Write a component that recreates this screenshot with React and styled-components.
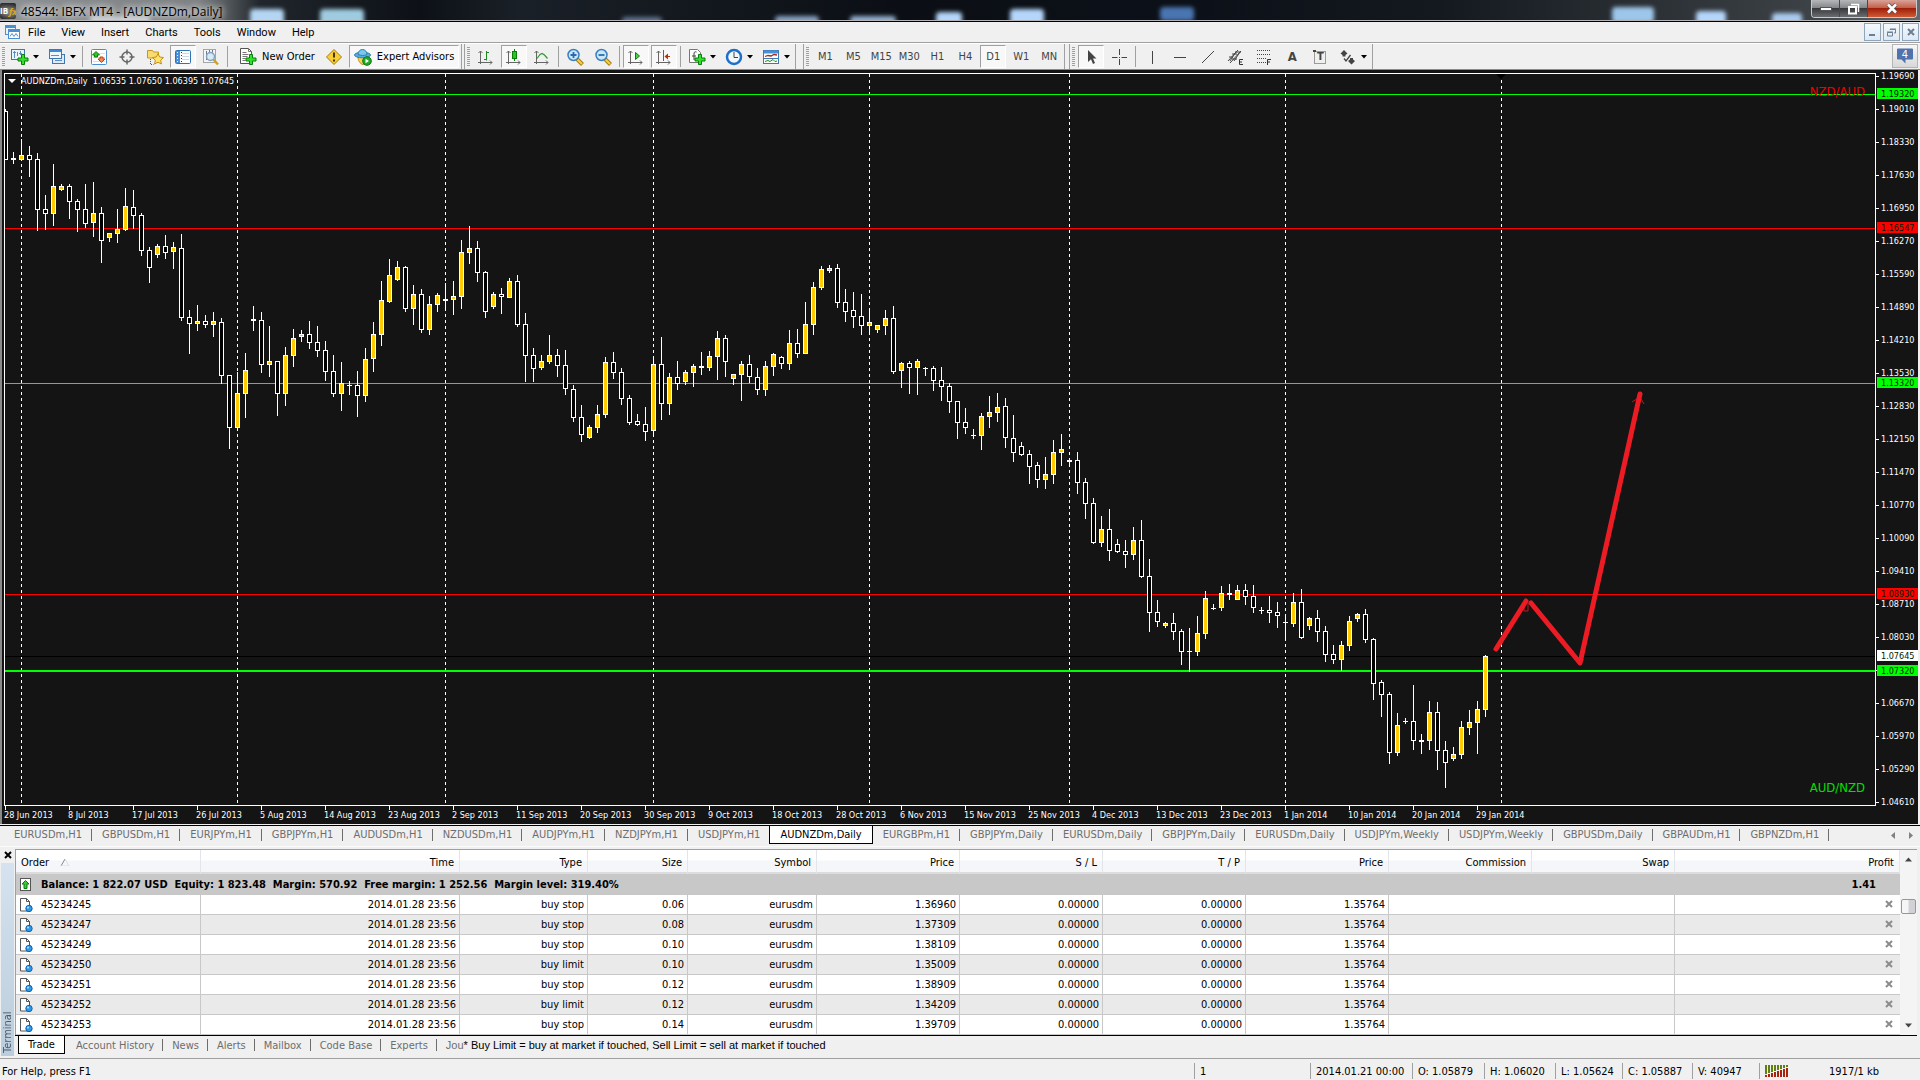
import { useState } from 'react';
import styled, { createGlobalStyle, css } from 'styled-components';

const GlobalStyle = createGlobalStyle`
  * {
    box-sizing: border-box;
  }

  body {
    margin: 0;
    background: #f0f0f0;
    color: #000;
    font-family: 'DejaVu Sans Condensed', 'DejaVu Sans', Roboto, sans-serif;
    font-size: 11px;
    overflow: hidden;
  }

  button {
    padding: 0;
    border: 0;
    background: none;
    color: inherit;
    font: inherit;
  }
`;

/* ---------- data ---------- */

const menus = ['File', 'View', 'Insert', 'Charts', 'Tools', 'Window', 'Help'];
const timeframes = ['M1', 'M5', 'M15', 'M30', 'H1', 'H4', 'D1', 'W1', 'MN'];

// high, body top, body bottom, low, 1 = bullish
const candles = [
  [109, 111, 160, 160, 0], [152, 158, 160, 164, 0], [139, 155, 160, 160, 1], [146, 155, 160, 177, 0],
  [153, 159, 210, 231, 0], [195, 209, 214, 230, 0], [164, 186, 214, 226, 1], [184, 186, 190, 191, 1],
  [184, 186, 202, 219, 0], [199, 201, 210, 232, 0], [184, 209, 224, 228, 0], [182, 213, 223, 237, 1],
  [207, 213, 241, 263, 0], [233, 233, 238, 242, 1], [209, 229, 234, 243, 1], [188, 206, 230, 231, 1],
  [190, 207, 216, 229, 0], [213, 215, 251, 256, 0], [247, 250, 268, 283, 0], [244, 246, 255, 258, 1],
  [235, 246, 253, 259, 0], [242, 247, 252, 269, 1], [234, 248, 318, 321, 0], [310, 317, 324, 354, 0],
  [305, 321, 324, 331, 1], [315, 321, 325, 328, 0], [312, 321, 325, 337, 1], [318, 322, 376, 384, 0],
  [375, 375, 428, 449, 0], [372, 393, 428, 430, 1], [353, 370, 394, 418, 1], [306, 319, 321, 331, 0],
  [312, 320, 365, 373, 0], [326, 361, 365, 377, 1], [361, 361, 394, 416, 0], [347, 355, 394, 406, 1],
  [329, 338, 356, 367, 1], [330, 334, 337, 342, 1], [321, 334, 343, 349, 0], [326, 342, 351, 357, 0],
  [341, 350, 372, 381, 0], [355, 371, 394, 397, 0], [362, 383, 394, 411, 1], [381, 385, 386, 395, 0],
  [371, 385, 396, 417, 0], [348, 359, 396, 402, 1], [322, 334, 359, 372, 1], [281, 300, 335, 346, 1],
  [259, 275, 302, 303, 1], [261, 267, 280, 281, 1], [266, 267, 309, 312, 0], [285, 294, 309, 325, 1],
  [289, 294, 330, 333, 0], [296, 304, 330, 335, 1], [293, 295, 305, 312, 1], [283, 299, 301, 310, 0],
  [281, 296, 300, 315, 1], [240, 252, 297, 309, 1], [226, 248, 253, 264, 1], [241, 248, 273, 282, 0],
  [271, 272, 312, 318, 0], [292, 294, 307, 309, 1], [288, 294, 297, 314, 0], [278, 281, 298, 298, 1],
  [275, 281, 325, 327, 0], [313, 324, 356, 382, 0], [348, 355, 369, 382, 0], [355, 361, 368, 370, 1],
  [335, 355, 362, 364, 1], [349, 355, 366, 377, 0], [350, 365, 389, 395, 0], [385, 389, 418, 422, 0],
  [405, 417, 435, 442, 0], [425, 427, 438, 439, 1], [405, 414, 428, 433, 1], [357, 362, 415, 418, 1],
  [352, 362, 373, 379, 0], [368, 372, 399, 405, 0], [395, 398, 423, 425, 0], [414, 421, 425, 426, 0],
  [407, 424, 432, 441, 0], [359, 364, 431, 437, 1], [337, 364, 404, 420, 0], [373, 377, 404, 415, 1],
  [361, 377, 384, 390, 0], [370, 372, 382, 385, 1], [364, 366, 373, 387, 1], [352, 366, 368, 375, 0],
  [351, 356, 368, 371, 1], [331, 338, 357, 380, 1], [335, 338, 362, 377, 0], [374, 374, 379, 385, 1],
  [361, 364, 375, 401, 1], [355, 364, 377, 383, 0], [368, 377, 390, 395, 0], [361, 366, 390, 396, 1],
  [353, 354, 367, 376, 1], [356, 357, 364, 369, 0], [330, 343, 364, 370, 1], [329, 343, 354, 358, 0],
  [302, 324, 354, 354, 1], [282, 287, 325, 335, 1], [266, 269, 288, 290, 1], [265, 268, 271, 273, 1],
  [264, 268, 303, 308, 0], [289, 302, 312, 322, 0], [292, 310, 317, 328, 0], [294, 316, 326, 335, 0],
  [311, 322, 326, 335, 1], [325, 325, 330, 333, 1], [310, 318, 326, 335, 1], [306, 318, 372, 374, 0],
  [362, 363, 371, 388, 1], [361, 363, 368, 394, 0], [359, 361, 368, 395, 1], [367, 368, 369, 376, 0],
  [366, 368, 381, 391, 0], [367, 380, 387, 401, 0], [383, 386, 402, 413, 0], [401, 401, 423, 439, 0],
  [408, 422, 428, 434, 0], [429, 435, 436, 439, 0], [413, 416, 436, 450, 1], [396, 412, 417, 428, 1],
  [393, 407, 413, 422, 1], [398, 406, 438, 448, 0], [415, 438, 453, 462, 0], [442, 446, 455, 456, 0],
  [450, 454, 467, 484, 0], [462, 465, 480, 488, 0], [457, 474, 480, 489, 1], [440, 452, 475, 484, 1],
  [434, 449, 453, 466, 1], [459, 460, 462, 465, 0], [452, 460, 483, 494, 0], [478, 482, 504, 519, 0],
  [498, 503, 543, 544, 0], [516, 529, 543, 547, 1], [509, 529, 551, 561, 0], [539, 544, 552, 553, 0],
  [540, 551, 555, 568, 0], [527, 540, 555, 560, 1], [520, 540, 577, 578, 0], [559, 576, 613, 632, 0],
  [600, 612, 622, 627, 0], [622, 623, 626, 628, 1], [613, 623, 632, 640, 0], [629, 631, 652, 665, 0],
  [628, 651, 652, 672, 0], [616, 633, 652, 656, 1], [591, 598, 634, 639, 1], [604, 608, 609, 610, 0],
  [586, 593, 608, 611, 1], [584, 593, 595, 600, 0], [585, 590, 600, 600, 1], [584, 590, 597, 605, 0],
  [585, 596, 608, 613, 0], [607, 610, 611, 614, 0], [596, 610, 613, 623, 0], [602, 612, 616, 628, 0],
  [614, 622, 623, 640, 0], [593, 602, 624, 627, 1], [589, 602, 638, 639, 0], [617, 618, 626, 630, 1],
  [610, 618, 632, 642, 0], [626, 631, 655, 662, 0], [645, 654, 660, 664, 0], [641, 645, 660, 671, 1],
  [616, 621, 646, 651, 1], [613, 614, 619, 622, 1], [609, 614, 640, 643, 0], [638, 639, 684, 700, 0],
  [680, 682, 695, 717, 0], [692, 694, 753, 764, 0], [713, 725, 753, 756, 1], [718, 721, 722, 724, 0],
  [685, 721, 741, 750, 0], [734, 740, 742, 754, 0], [701, 712, 741, 750, 1], [702, 712, 751, 770, 0],
  [741, 750, 763, 788, 0], [747, 754, 759, 761, 1], [721, 727, 755, 759, 1], [710, 722, 728, 735, 1],
  [701, 709, 723, 754, 1], [655, 656, 710, 717, 1],
];

const monthLines = [21, 237, 445, 653, 869, 1069, 1285, 1501];

const levels = [
  { y: 94, color: '#00ff00', size: 1 },
  { y: 228, color: '#ff0000', size: 1 },
  { y: 383, color: '#00ff00', size: 1 },
  { y: 594, color: '#ff0000', size: 1 },
  { y: 656, color: '#000000', size: 1 },
  { y: 670, color: '#00ff00', size: 2 },
];

const prices = [
  '1.19690', '1.19010', '1.18330', '1.17630', '1.16950', '1.16270', '1.15590', '1.14890',
  '1.14210', '1.13530', '1.12830', '1.12150', '1.11470', '1.10770', '1.10090', '1.09410',
  '1.08710', '1.08030', '', '1.06670', '1.05970', '1.05290', '1.04610',
];

const priceTags = [
  { y: 94, text: '1.19320', color: '#00ff00' },
  { y: 228, text: '1.16547', color: '#ff0000' },
  { y: 383, text: '1.13320', color: '#00ff00' },
  { y: 594, text: '1.08930', color: '#ff0000' },
  { y: 656, text: '1.07645', color: '#ffffff' },
  { y: 671, text: '1.07320', color: '#00ff00' },
];

const dates = [
  '28 Jun 2013', '8 Jul 2013', '17 Jul 2013', '26 Jul 2013', '5 Aug 2013', '14 Aug 2013',
  '23 Aug 2013', '2 Sep 2013', '11 Sep 2013', '20 Sep 2013', '30 Sep 2013', '9 Oct 2013',
  '18 Oct 2013', '28 Oct 2013', '6 Nov 2013', '15 Nov 2013', '25 Nov 2013', '4 Dec 2013',
  '13 Dec 2013', '23 Dec 2013', '1 Jan 2014', '10 Jan 2014', '20 Jan 2014', '29 Jan 2014',
];

const chartTabs = [
  'EURUSDm,H1', 'GBPUSDm,H1', 'EURJPYm,H1', 'GBPJPYm,H1', 'AUDUSDm,H1', 'NZDUSDm,H1',
  'AUDJPYm,H1', 'NZDJPYm,H1', 'USDJPYm,H1', 'AUDNZDm,Daily', 'EURGBPm,H1', 'GBPJPYm,Daily',
  'EURUSDm,Daily', 'GBPJPYm,Daily', 'EURUSDm,Daily', 'USDJPYm,Weekly', 'USDJPYm,Weekly',
  'GBPUSDm,Daily', 'GBPAUDm,H1', 'GBPNZDm,H1',
];

const columns = [
  { name: 'Order', width: 185 },
  { name: 'Time', width: 259 },
  { name: 'Type', width: 128 },
  { name: 'Size', width: 100 },
  { name: 'Symbol', width: 129 },
  { name: 'Price', width: 143 },
  { name: 'S / L', width: 143 },
  { name: 'T / P', width: 143 },
  { name: 'Price', width: 143 },
  { name: 'Commission', width: 143 },
  { name: 'Swap', width: 143 },
  { name: 'Profit' },
];

const orders = [
  { id: '45234245', type: 'buy stop', size: '0.06', price: '1.36960' },
  { id: '45234247', type: 'buy stop', size: '0.08', price: '1.37309' },
  { id: '45234249', type: 'buy stop', size: '0.10', price: '1.38109' },
  { id: '45234250', type: 'buy limit', size: '0.10', price: '1.35009' },
  { id: '45234251', type: 'buy stop', size: '0.12', price: '1.38909' },
  { id: '45234252', type: 'buy limit', size: '0.12', price: '1.34209' },
  { id: '45234253', type: 'buy stop', size: '0.14', price: '1.39709' },
];

const terminalTabs = ['Trade', 'Account History', 'News', 'Alerts', 'Mailbox', 'Code Base', 'Experts'];

/* ---------- icons ---------- */

const Icon = ({ size = 18, children }) => (
  <svg width={size} height={size} viewBox={`0 0 ${size} ${size}`} fill="none" aria-hidden="true">
    {children}
  </svg>
);

const Plus = () => (
  <path d="M10.500 6.500h3v3.500h3.500v3h-3.500v3.500h-3v-3.500H7v-3h3.500z" fill="#35e02c" stroke="#0b7d0b" />
);

const NewChartIcon = () => (
  <Icon>
    <rect x="0.500" y="1.500" width="13" height="10" fill="#eaf4fd" stroke="#3f78b0" />
    <path d="M3.500 3v7M2 4.500h3M6.500 4v4M9.500 3v4M8 5.500h3" stroke="#5b8fc2" />
    <Plus />
  </Icon>
);

const ProfilesIcon = () => (
  <Icon>
    <rect x="4.500" y="6.500" width="12" height="9" fill="#dcebf9" stroke="#3f78b0" />
    <path d="M7 12.500h7" stroke="#5b8fc2" />
    <rect x="1.500" y="1.500" width="12" height="9" fill="#eef6fd" stroke="#3f78b0" />
    <path d="M2 3h11" stroke="#3f8ad0" strokeWidth="2" />
    <path d="M3 7.500h8" stroke="#5b8fc2" />
  </Icon>
);

const MarketWatchIcon = () => (
  <Icon>
    <rect x="1.500" y="1.500" width="15" height="15" rx="1" fill="#fff" stroke="#4a90d0" />
    <path d="M3 5.500h12M3 9.500h12M3 13.500h12" stroke="#cfe0ef" />
    <path d="M6 3.500l3.500 3.500H7.500v2h-3V7H2.500z" fill="#2fc52f" stroke="#0b7d0b" />
    <path d="M11.500 14.500L8 11h2V9h3v2h2z" fill="#f08a50" stroke="#c0401a" />
  </Icon>
);

const TargetIcon = () => (
  <Icon>
    <circle cx="9" cy="9" r="5" stroke="#666" strokeWidth="1.500" />
    <path d="M9 1.500v5M9 11.500v5M1.500 9h5M11.500 9h5" stroke="#666" strokeWidth="1.500" />
  </Icon>
);

const FavoritesIcon = () => (
  <Icon>
    <path d="M1.500 2.500h5l1 1.500h5v6h-11z" fill="#f8dc70" stroke="#c09a20" />
    <path d="M4.500 11v5.500h3" stroke="#555" strokeDasharray="1 1" />
    <path d="M12 5.500l1.700 3.500 3.800.5-2.800 2.700.7 3.800-3.400-1.800-3.400 1.800.7-3.800-2.800-2.700 3.800-.5z" fill="#ffe36b" stroke="#c58f13" />
  </Icon>
);

const NavigatorIcon = () => (
  <Icon>
    <rect x="1.500" y="2.500" width="15" height="13" rx="1" fill="#fff" stroke="#2f74b5" />
    <rect x="2" y="3" width="4" height="12" fill="#4a90d8" />
    <path d="M3.500 4v10" stroke="#fff" strokeDasharray="1 2" />
    <path d="M8 5.500h7M8 8.500h7M8 11.500h7" stroke="#c9d8e8" />
    <path d="M7.500 4v10" stroke="#333" strokeDasharray="1 2" />
  </Icon>
);

const TesterIcon = () => (
  <Icon>
    <rect x="1.500" y="1.500" width="12" height="13" fill="#f6f6f6" stroke="#a5a5a5" />
    <path d="M4.500 3v9M7.500 2v4M10.500 2v5" stroke="#777" />
    <path d="M11 11l5 5.500" stroke="#d6a11a" strokeWidth="2.500" />
    <circle cx="8.500" cy="8.500" r="4" fill="#cfe6f8" fillOpacity="0.800" stroke="#7fa6c8" strokeWidth="1.500" />
  </Icon>
);

const NewOrderIcon = () => (
  <Icon>
    <path d="M1.500.500h8l3 3v12h-11z" fill="#fff" stroke="#555" />
    <path d="M9.500.500v3h3M3.500 4.500h4M3.500 6.500h6M3.500 8.500h5M3.500 10.500h3M3.500 12.500h3" stroke="#777" />
    <Plus />
  </Icon>
);

const AlertIcon = () => (
  <Icon>
    <path d="M9 1.500l7.500 7.500L9 16.500 1.500 9z" fill="#f7cf35" stroke="#a87c0a" />
    <path d="M9 4.500v5M9 11.500v2" stroke="#4a3500" strokeWidth="2" />
  </Icon>
);

const AdvisorIcon = () => (
  <Icon>
    <path d="M4 8.500c0 4 2 7.500 5 8 3-.5 5-4 5-8z" fill="#f7d552" stroke="#bb8b1a" />
    <ellipse cx="8.500" cy="7" rx="8" ry="2.800" fill="#56aee0" stroke="#2c7fb5" />
    <path d="M4 6.500c0-3 2-5 4.500-5s4.500 2 4.500 5c-3 1.300-6 1.300-9 0z" fill="#7cc7ee" stroke="#2c7fb5" />
    <circle cx="13" cy="13" r="4.300" fill="#1faa28" stroke="#0d7a14" />
    <path d="M11.500 10.800v4.400l3.500-2.200z" fill="#fff" />
  </Icon>
);

const Axes = () => (
  <path d="M3.500 16V3M1.500 5l2-2 2 2M1 14.500h14M13 12.500l2 2-2 2" stroke="#666" />
);

const BarChartIcon = () => (
  <Icon>
    <Axes />
    <path d="M9.500 3v9.500M9 4.500h3M7 11.500h3" stroke="#1d8a1d" />
  </Icon>
);

const CandleChartIcon = () => (
  <Icon>
    <Axes />
    <path d="M9.500 1v12" stroke="#0b7d0b" />
    <rect x="7.500" y="3.500" width="4" height="7" fill="#28c428" stroke="#0b7d0b" />
  </Icon>
);

const LineChartIcon = () => (
  <Icon>
    <Axes />
    <path d="M4 10.500l3-4 2-1 2.500 1.500 3 3.500" stroke="#2f9a2f" strokeWidth="1.200" />
  </Icon>
);

const ZoomIcon = ({ plus }) => (
  <Icon>
    <path d="M11 11l5.500 5.500" stroke="#a87c0a" strokeWidth="4" />
    <path d="M11 11l5 5" stroke="#f5d24a" strokeWidth="2" />
    <circle cx="7.500" cy="7" r="5.500" fill="#c9e7fb" stroke="#3b7fc0" strokeWidth="1.500" />
    <path d={plus ? 'M4.500 7h6M7.500 4v6' : 'M4.500 7h6'} stroke="#2a6bb0" strokeWidth="1.800" />
  </Icon>
);

const AutoScrollIcon = () => (
  <Icon>
    <Axes />
    <path d="M8.500 4.500v7l4-3.500z" fill="#4fd04f" stroke="#0b7d0b" />
  </Icon>
);

const ShiftIcon = () => (
  <Icon>
    <Axes />
    <path d="M8.500 2v11" stroke="#1e6fb8" />
    <path d="M10 8.500h5" stroke="#b5320f" />
    <path d="M13 5.500v6l-3.500-3z" fill="#b5320f" />
  </Icon>
);

const IndicatorsIcon = () => (
  <Icon>
    <path d="M1.500 1.500h8l3 3v10h-11z" fill="#fff" stroke="#777" />
    <path d="M8.500 4c-2-.8-2.500.5-2.500 2v6M4 8h4" stroke="#444" />
    <Plus />
  </Icon>
);

const ClockIcon = () => (
  <Icon>
    <circle cx="9" cy="9" r="7" fill="#f2f7fb" stroke="#1d6fc9" strokeWidth="2.500" />
    <path d="M9 4v5.500h4" stroke="#444" />
  </Icon>
);

const TemplateIcon = () => (
  <Icon>
    <rect x="1.500" y="2.500" width="15" height="13" fill="#fff" stroke="#3f78b0" />
    <path d="M2 4h14" stroke="#4a90d8" strokeWidth="3" />
    <path d="M2 10.500h14" stroke="#3f78b0" />
    <path d="M3 8.500l3-1 3 .5 3-1.500 3 .5" stroke="#a52c18" strokeWidth="1.300" />
    <path d="M3 13.500l3-1 2 1 3-2 2 2 2-.5" stroke="#1d8a1d" />
  </Icon>
);

const CursorIcon = () => (
  <Icon>
    <path d="M6 2v12l3-2.700 2 4.700 2-1-2-4.500h3.500z" fill="#444" />
  </Icon>
);

const CrosshairIcon = () => (
  <Icon>
    <path d="M9.500 1v6M9.500 11v6M2 9.500h5.500M11.500 9.500H17M9 9.500h1" stroke="#444" />
  </Icon>
);

const VLineIcon = () => (
  <Icon>
    <path d="M9.500 3v13" stroke="#444" />
  </Icon>
);

const HLineIcon = () => (
  <Icon>
    <path d="M3 9.500h12" stroke="#444" />
  </Icon>
);

const TrendIcon = () => (
  <Icon>
    <path d="M3 15L15 3" stroke="#444" />
  </Icon>
);

const ChannelIcon = () => (
  <Icon>
    <path d="M1 13L11 2M3 15L14 3M2 9h4M5 6h5M8 4h6M5 11h5M3 13l6-9M7 13l6-9" stroke="#444" />
    <path d="M16 11.500h-3.500v5H16M12.500 14H15" stroke="#333" />
  </Icon>
);

const FiboIcon = () => (
  <Icon>
    <path d="M2 2.500h14M2 6.500h14M2 10.500h10M2 14.500h9" stroke="#444" strokeDasharray="1 1" />
    <path d="M12.500 17v-5.500H16M12.500 14H15" stroke="#333" />
  </Icon>
);

const LabelIcon = () => (
  <Icon>
    <rect x="3.500" y="3.500" width="11" height="12" stroke="#444" strokeDasharray="1 1" />
    <path d="M2 2h3v2H2z" fill="#444" />
  </Icon>
);

const ArrowsIcon = () => (
  <Icon>
    <path d="M5 2l3.500 3.500L6.500 7v1.500h-3V7L1.500 5.500zM12.500 16.500L9 13l2-1.500V10h3v1.500l2 1.500z" fill="#444" />
    <path d="M5 10.500l2 2.500 4.500-6" stroke="#444" strokeWidth="1.300" />
  </Icon>
);

const Caret = () => (
  <svg width="6" height="4" aria-hidden="true">
    <path d="M0 0h6L3 3.500z" fill="#000" />
  </svg>
);

const OrderIcon = () => (
  <svg width="14" height="16" viewBox="0 0 14 16" fill="none" aria-hidden="true">
    <path d="M1.500 1.500h6l3 3v9.500h-9z" fill="#fff" stroke="#555" />
    <path d="M7.500 1.500v3h3" stroke="#555" />
    <circle cx="10" cy="11.500" r="3.200" fill="#2f9ae8" stroke="#1561a8" />
    <circle cx="9" cy="10.500" r="1" fill="#bfe2fb" />
  </svg>
);

const BalanceIcon = () => (
  <svg width="14" height="14" viewBox="0 0 14 14" fill="none" aria-hidden="true">
    <rect x="1.500" y="0.500" width="10" height="12" fill="#fff" stroke="#555" />
    <path d="M6.500 2.500L10 6H8v4.500H5V6H3z" fill="#35c935" stroke="#0b7d0b" />
  </svg>
);

const CloseMark = ({ color = '#8c8c8c' }) => (
  <svg width="8" height="8" viewBox="0 0 8 8" aria-hidden="true">
    <path d="M1 1l6 6M7 1L1 7" stroke={color} strokeWidth="2" />
  </svg>
);

/* ---------- title bar and menu ---------- */

const TitleRow = styled.header`
  position: relative;
  display: flex;
  flex: none;
  justify-content: space-between;
  height: 22px;
  background: linear-gradient(90deg, #8d9092 0, #7d8183 200px, #20262b 260px, #0d1117 420px, #1a2027 520px, #0b0f15 900px, #0c1018 1200px, #14191f 75%, #3c4146 94%, #63686c);
  border-bottom: 1px solid #000;
  box-shadow: inset 0 -1px #b4b4b8;
  overflow: hidden;
`;

const Backdrop = styled.svg`
  position: absolute;
  inset: 0;
  width: 100%;
  height: 20px;
`;

const TitleText = styled.h1`
  position: relative;
  display: flex;
  align-items: center;
  gap: 5px;
  height: 20px;
  margin: 0;
  padding-top: 2px;
  font: 400 12px 'Open Sans', 'Noto Sans', sans-serif;
  text-shadow: 0 0 6px #fff, 0 0 10px #fff;
`;

const WindowButtons = styled.div`
  position: relative;
  display: flex;
  height: 18px;
  margin-right: 3px;
  border: 1px solid #c8cacc;
  border-top: 0;
  border-radius: 0 0 4px 4px;
  overflow: hidden;
`;

const WindowButton = styled.button`
  display: flex;
  align-items: center;
  justify-content: center;
  width: ${({ $close }) => ($close ? '48px' : '28px')};
  border-right: 1px solid #46494c;
  background: linear-gradient(#b5b7b9, #85888a 45%, #37393b 50%, #6a6d70);

  ${({ $close }) =>
    $close &&
    css`
      border-right: 0;
      background: linear-gradient(#d9a398, #c4604d 45%, #a01f08 50%, #cf5a35);
    `}
`;

const MenuRow = styled.nav`
  display: flex;
  flex: none;
  align-items: center;
  height: 21px;
  padding: 0 1px 0 5px;
  background: #f0f0f0;
  border-bottom: 1px solid #a0a0a0;
`;

const MenuItem = styled.button`
  height: 20px;
  padding: 0 8px;
  font: 11px Roboto, 'Open Sans', sans-serif;
`;

const MdiButtons = styled.div`
  display: flex;
  gap: 2px;
  margin-left: auto;
`;

const MdiButton = styled.button`
  display: flex;
  align-items: center;
  justify-content: center;
  width: 17px;
  height: 18px;
  border: 1px solid #8fa5ba;
  background: linear-gradient(#f4f9fd, #dce9f5);
`;

const blobs = [
  [250, 9, 34, 20, '#b4d6f4'], [320, 9, 44, 20, '#9fcbe0'], [90, 16, 60, 10, '#c8ced2'], [622, 17, 40, 8, '#5f7690'],
  [775, 16, 44, 8, '#86a2c4'], [850, 16, 46, 8, '#93b0d0'], [936, 12, 26, 14, '#b4d6fa'], [1010, 9, 34, 16, '#b4d6fa'],
  [1160, 7, 34, 14, '#4a75b0'], [1612, 7, 42, 16, '#9cc6ea'], [1696, 11, 30, 14, '#b4d6fa'], [1772, 13, 30, 12, '#a9caee'],
];

const TitleBar = () => (
  <TitleRow>
    <Backdrop aria-hidden="true">
      <filter id="soft" x="-30%" y="-60%" width="160%" height="220%">
        <feGaussianBlur stdDeviation="2" />
      </filter>
      {blobs.map(([x, y, w, h, fill]) => (
        <rect key={x} x={x} y={y} width={w} height={h} rx="4" fill={fill} filter="url(#soft)" />
      ))}
    </Backdrop>
    <TitleText>
      <svg width="16" height="16" viewBox="0 0 16 16" aria-hidden="true">
        <rect width="16" height="16" rx="2" fill="#1b1b1b" />
        <text x="0" y="11" fontSize="8" fontWeight="700" fill="#fff">IB</text>
        <text x="9" y="12" fontSize="9" fontStyle="italic" fontWeight="700" fill="#d6a81c">fx</text>
      </svg>
      48544: IBFX MT4 - [AUDNZDm,Daily]
    </TitleText>
    <WindowButtons>
      <WindowButton aria-label="Minimize window">
        <svg width="12" height="6"><rect x="0.500" y="1.500" width="11" height="3" fill="#fff" stroke="#555" /></svg>
      </WindowButton>
      <WindowButton aria-label="Restore window">
        <svg width="13" height="12" fill="none">
          <path d="M4 1.500h7.500V9" stroke="#fff" strokeWidth="1.500" />
          <rect x="2" y="4" width="7" height="6.500" stroke="#fff" strokeWidth="2" />
        </svg>
      </WindowButton>
      <WindowButton $close aria-label="Close window">
        <svg width="12" height="11">
          <path d="M2 1.500l8 8M10 1.500l-8 8" stroke="#555" strokeWidth="4" />
          <path d="M2 1.500l8 8M10 1.500l-8 8" stroke="#fff" strokeWidth="2.500" />
        </svg>
      </WindowButton>
    </WindowButtons>
  </TitleRow>
);

const MenuBar = () => (
  <MenuRow>
    <svg width="15" height="15" viewBox="0 0 15 15" fill="none" aria-hidden="true">
      <rect x="0.500" y="0.500" width="10" height="9" fill="#eaf4fd" stroke="#4a90d0" />
      <path d="M1 2h9" stroke="#4a90d0" strokeWidth="2" />
      <rect x="3.500" y="4.500" width="11" height="9" fill="#fff" stroke="#4a90d0" />
      <path d="M4 6h10" stroke="#4a90d0" strokeWidth="2" />
      <path d="M5 11.500l2-3 2 3 2-3 2 3" stroke="#5b8fc2" />
    </svg>
    {menus.map((menu) => (
      <MenuItem key={menu}>{menu}</MenuItem>
    ))}
    <MdiButtons>
      <MdiButton aria-label="Minimize chart">
        <svg width="9" height="9"><path d="M1 7h6" stroke="#6d7f90" strokeWidth="2" /></svg>
      </MdiButton>
      <MdiButton aria-label="Restore chart">
        <svg width="9" height="9" fill="none">
          <path d="M3 2V1.500h5.500V5H7M.500 4.500h5v3.500h-5zM3 1h6M0 4h6" stroke="#6d7f90" />
        </svg>
      </MdiButton>
      <MdiButton aria-label="Close chart">
        <CloseMark color="#6d7f90" />
      </MdiButton>
    </MdiButtons>
  </MenuRow>
);

/* ---------- toolbar ---------- */

const ToolbarRow = styled.div`
  display: flex;
  flex: none;
  align-items: stretch;
  height: 27px;
  background: #f0f0f0;
  border-top: 1px solid #fff;
  border-bottom: 1px solid #8a8a8a;
`;

const ToolGroup = styled.div`
  display: flex;
  align-items: center;
  padding: 0 1px 0 ${({ $first }) => ($first ? '6px' : '7px')};
  margin-right: ${({ $gap }) => $gap || 0}px;
  border-right: 1px solid #a0a0a0;
  border-left: ${({ $first }) => ($first ? 0 : '1px solid #a0a0a0')};
  background:
    repeating-linear-gradient(#a0a0a0 0 1px, transparent 1px 2px) 2px 3px / 3px 19px no-repeat,
    #f0f0f0;
`;

const pressed = css`
  border: 1px solid;
  border-color: #a0a0a0 #fff #fff #a0a0a0;
  background: #f8f8f8;
`;

const ToolButton = styled.button`
  display: flex;
  flex: none;
  align-items: center;
  justify-content: center;
  min-width: 26px;
  height: 23px;
  margin: 0 1px;
  color: #444;
  ${({ $pressed }) => $pressed && pressed}
`;

const DropButton = styled(ToolButton)`
  gap: 4px;
  width: 35px;
`;

const TextButton = styled(ToolButton)`
  gap: 5px;
  padding: 0 4px 0 ${({ $pressed }) => ($pressed ? '4px' : '8px')};
  color: #000;
`;

const Letter = styled.span`
  font-size: ${({ $big }) => ($big ? '13px' : '11px')};
  font-weight: 700;
`;

const Stacked = styled.span`
  display: grid;
  place-items: center;

  > * {
    grid-area: 1 / 1;
  }
`;

const ToolDivider = styled.span`
  flex: none;
  width: 1px;
  height: 21px;
  margin: 0 2px;
  background: #a0a0a0;
`;

const NewsButton = styled.button`
  display: flex;
  align-items: center;
  justify-content: center;
  width: 26px;
  height: 24px;
  margin-left: auto;
  margin-right: 2px;
  border: 1px solid #b4b4b4;
  background: linear-gradient(#f8f8f8, #d8d8d8);
`;

const Toolbar = () => {
  const [period, setPeriod] = useState('D1');

  return (
    <ToolbarRow role="toolbar">
      <ToolGroup $first $gap={2}>
        <DropButton aria-label="New chart"><NewChartIcon /><Caret /></DropButton>
        <DropButton aria-label="Profiles"><ProfilesIcon /><Caret /></DropButton>
        <ToolDivider />
        <ToolButton aria-label="Market watch"><MarketWatchIcon /></ToolButton>
        <ToolButton aria-label="Data window"><TargetIcon /></ToolButton>
        <ToolButton aria-label="Favorites"><FavoritesIcon /></ToolButton>
        <ToolButton $pressed aria-label="Navigator"><NavigatorIcon /></ToolButton>
        <ToolButton aria-label="Strategy tester"><TesterIcon /></ToolButton>
        <ToolDivider />
        <TextButton><NewOrderIcon />New Order</TextButton>
        <ToolButton aria-label="Alerts"><AlertIcon /></ToolButton>
        <TextButton $pressed><AdvisorIcon />Expert Advisors</TextButton>
      </ToolGroup>
      <ToolGroup $gap={7}>
        <ToolButton aria-label="Bar chart"><BarChartIcon /></ToolButton>
        <ToolButton $pressed aria-label="Candlesticks"><CandleChartIcon /></ToolButton>
        <ToolButton aria-label="Line chart"><LineChartIcon /></ToolButton>
        <ToolDivider />
        <ToolButton aria-label="Zoom in"><ZoomIcon plus /></ToolButton>
        <ToolButton aria-label="Zoom out"><ZoomIcon /></ToolButton>
        <ToolDivider />
        <ToolButton $pressed aria-label="Auto scroll"><AutoScrollIcon /></ToolButton>
        <ToolButton $pressed aria-label="Chart shift"><ShiftIcon /></ToolButton>
        <ToolDivider />
        <DropButton aria-label="Indicators"><IndicatorsIcon /><Caret /></DropButton>
        <DropButton aria-label="Periods"><ClockIcon /><Caret /></DropButton>
        <DropButton aria-label="Templates"><TemplateIcon /><Caret /></DropButton>
      </ToolGroup>
      <ToolGroup $gap={4}>
        {timeframes.map((name) => (
          <ToolButton key={name} $pressed={name === period} onClick={() => setPeriod(name)}>
            {name}
          </ToolButton>
        ))}
      </ToolGroup>
      <ToolGroup>
        <ToolButton $pressed aria-label="Cursor"><CursorIcon /></ToolButton>
        <ToolButton aria-label="Crosshair"><CrosshairIcon /></ToolButton>
        <ToolDivider />
        <ToolButton aria-label="Vertical line"><VLineIcon /></ToolButton>
        <ToolButton aria-label="Horizontal line"><HLineIcon /></ToolButton>
        <ToolButton aria-label="Trendline"><TrendIcon /></ToolButton>
        <ToolButton aria-label="Channel"><ChannelIcon /></ToolButton>
        <ToolButton aria-label="Fibonacci"><FiboIcon /></ToolButton>
        <ToolButton><Letter $big>A</Letter></ToolButton>
        <ToolButton><Stacked><LabelIcon /><Letter>T</Letter></Stacked></ToolButton>
        <DropButton aria-label="Arrows"><ArrowsIcon /><Caret /></DropButton>
      </ToolGroup>
      <NewsButton aria-label="4 messages">
        <svg width="18" height="18" viewBox="0 0 18 18" aria-hidden="true">
          <path d="M2 1.500h14q1 0 1 1v9q0 1-1 1H9.500v4l-4-4H2q-1 0-1-1v-9q0-1 1-1z" fill="#4f73ad" />
          <text x="9" y="11" fontSize="11" textAnchor="middle" fill="#fff">4</text>
        </svg>
      </NewsButton>
    </ToolbarRow>
  );
};

/* ---------- chart ---------- */

const ChartFrame = styled.main`
  display: grid;
  flex: 1;
  grid-template-columns: 1fr 42px;
  grid-template-rows: 1fr 18px;
  min-height: 0;
  margin-right: 2px;
  padding: 3px 0 0 2px;
  border-left: 2px solid #8a8a8a;
  background: #141414;
`;

const Plot = styled.div`
  position: relative;
  min-height: 0;
  border: 1px solid #fff;
`;

const Drawing = styled.svg`
  display: block;
  width: 100%;
  height: 100%;
`;

const Quote = styled.div`
  position: absolute;
  top: 2px;
  left: 2px;
  display: flex;
  align-items: center;
  gap: 5px;
  color: #fff;
  font-size: 9px;
  white-space: pre;
`;

const PairLabel = styled.span`
  position: absolute;
  right: 10px;
  ${({ $bottom }) => ($bottom ? 'bottom: 9px' : 'top: 9px')};
  color: ${({ $bottom }) => ($bottom ? '#00e000' : '#f00000')};
  font-size: 13px;
  line-height: 17px;
`;

const AxisText = styled.text`
  fill: ${({ $dark }) => ($dark ? '#002000' : '#fff')};
  font-size: 9px;
`;

const Axis = styled.svg`
  width: 100%;
  height: 100%;
  overflow: visible;
`;

const Candle = ({ x, high, top, bottom, low, up }) => (
  <>
    <rect x={x} y={high} width="1" height={low - high} fill="#fff" />
    <rect x={x - 2} y={top} width="5" height={bottom - top} fill="#fff" />
    {bottom - top > 2 && (
      <rect x={x - 1} y={top + 1} width="3" height={bottom - top - 2} fill={up ? '#ffcc00' : '#000'} />
    )}
  </>
);

const Chart = () => (
  <ChartFrame>
    <Plot>
      <Drawing role="img" aria-label="AUDNZDm daily candles">
        <g transform="translate(-5 -74)">
          <g shapeRendering="crispEdges">
            {monthLines.map((x) => (
              <path key={x} d={`M${x + 0.5} 74V805`} stroke="#fff" strokeDasharray="3 3" />
            ))}
            {levels.map(({ y, color, size }) => (
              <rect key={y} x="5" y={y} width="100%" height={size} fill={color} />
            ))}
            {candles.map(([high, top, bottom, low, up], i) => (
              <Candle key={i} x={5 + i * 8} high={high} top={top} bottom={bottom} low={low} up={up} />
            ))}
          </g>
          <path d="M1496 74h10l-5 5z" fill="#000" />
          <path d="M1632 402l8-5 4 7M1524 605v6h4v-8M1580 658l4 2" fill="none" stroke="#c01818" />
          <g fill="none" stroke="#ed1c24" strokeWidth="5" strokeLinecap="round" strokeLinejoin="round">
            <path d="M1496 649L1526 601" />
            <path d="M1531 603L1580 663L1640 394" />
          </g>
        </g>
      </Drawing>
      <Quote>
        <svg width="9" height="6" aria-hidden="true"><path d="M1 1h8l-4 4z" fill="#fff" /></svg>
        {'AUDNZDm,Daily  1.06535 1.07650 1.06395 1.07645'}
      </Quote>
      <PairLabel>NZD/AUD</PairLabel>
      <PairLabel $bottom>AUD/NZD</PairLabel>
    </Plot>
    <Axis>
      {prices.map((price, i) => (
        <g key={i}>
          <rect y={3 + i * 33} width="3" height="1" fill="#fff" />
          <AxisText x="5" y={6 + i * 33}>{price}</AxisText>
        </g>
      ))}
      {priceTags.map(({ y, text, color }) => (
        <g key={y}>
          <rect x="1" y={y - 79} width="41" height="11" fill={color} />
          <AxisText $dark x="5" y={y - 70}>{text}</AxisText>
        </g>
      ))}
    </Axis>
    <Axis>
      {dates.map((date, i) => (
        <g key={date}>
          <rect x={1 + i * 64} width="1" height="4" fill="#fff" />
          <AxisText x={i * 64} y="12">{date}</AxisText>
        </g>
      ))}
    </Axis>
  </ChartFrame>
);

/* ---------- tab strips ---------- */

const ChartTabRow = styled.div`
  display: flex;
  flex: none;
  height: 22px;
  margin: 1px 0 2px;
  padding-left: 4px;
  border-top: 1px solid #000;
  border-bottom: 1px solid #fafafa;
  background: #f0f0f0;
`;

const ChartTab = styled.button`
  position: relative;
  height: 17px;
  padding: 0 10px;
  color: #6d6d6d;
  white-space: nowrap;

  &::after {
    content: '';
    position: absolute;
    top: 3px;
    right: 0;
    width: 1px;
    height: 12px;
    background: #6d6d6d;
  }

  ${({ $active }) =>
    $active &&
    css`
      height: 18px;
      margin-left: -1px;
      border: 1px solid #000;
      border-top: 0;
      background: #fff;
      color: #000;

      &::after {
        display: none;
      }
    `}
`;

const TabArrows = styled.div`
  display: flex;
  align-items: center;
  gap: 12px;
  height: 18px;
  margin-left: auto;
  padding-right: 7px;
`;

const ChartTabs = () => {
  const [active, setActive] = useState(9);

  return (
    <ChartTabRow>
      {chartTabs.map((tab, i) => (
        <ChartTab key={i} $active={i === active} onClick={() => setActive(i)}>
          {tab}
        </ChartTab>
      ))}
      <TabArrows>
        <button aria-label="Previous tabs">
          <svg width="5" height="7"><path d="M4 0v7L0 3.500z" fill="#808080" /></svg>
        </button>
        <button aria-label="Next tabs">
          <svg width="5" height="7"><path d="M1 0v7l4-3.500z" fill="#808080" /></svg>
        </button>
      </TabArrows>
    </ChartTabRow>
  );
};

/* ---------- terminal ---------- */

const TerminalFrame = styled.section`
  display: grid;
  flex: none;
  grid-template-columns: 15px 1fr;
  padding-right: 3px;
`;

const SideStrip = styled.div`
  display: flex;
  flex-direction: column;
  align-items: center;
`;

const SideTitle = styled.h2`
  flex: 1;
  width: 13px;
  margin: 2px 0;
  padding-top: 3px;
  background: linear-gradient(#bacddc, #d6e2ef);
  color: #4c5a68;
  font: 400 11px/13px 'DejaVu Sans Condensed', 'DejaVu Sans', sans-serif;
  writing-mode: vertical-rl;
  transform: rotate(180deg);
`;

const CloseButton = styled.button`
  height: 12px;
`;

const TableArea = styled.div`
  display: flex;
  border-top: 1px solid #a0a0a0;
  border-left: 1px solid #a0a0a0;
  background: #fff;
`;

const OrderTable = styled.table`
  flex: 1;
  width: 100%;
  table-layout: fixed;
  border-collapse: separate;
  border-spacing: 0;
`;

const HeadCell = styled.th`
  height: 24px;
  padding: 3px 5px 0;
  border-right: 1px solid #e2e6ea;
  border-bottom: 2px solid #dcdcdc;
  background: linear-gradient(#fff 45%, #f4f6f9 50%);
  font-weight: 400;
  text-align: ${({ $left }) => ($left ? 'left' : 'right')};
`;

const BalanceCell = styled.td`
  height: 21px;
  padding: 0 ${({ $total }) => ($total ? '24px' : 0)} 0 3px;
  background: #c8c8c8;
  font-weight: 700;
  text-align: ${({ $total }) => ($total ? 'right' : 'left')};
  white-space: pre;
`;

const OrderRow = styled.tr`
  height: 20px;
  background: #fff;

  &:nth-child(odd) {
    background: #eaeaea;
  }
`;

const Cell = styled.td`
  padding: 0 3px;
  border-right: ${({ $open }) => ($open ? 0 : '1px solid #c8c8c8')};
  border-bottom: 1px solid #c8c8c8;
  text-align: ${({ $left }) => ($left ? 'left' : 'right')};
`;

const WithIcon = styled.span`
  display: flex;
  align-items: center;
  gap: 8px;
`;

const DeleteButton = styled.button`
  display: block;
  margin-left: auto;
  margin-right: 4px;
`;

const ScrollBar = styled.div`
  display: flex;
  flex-direction: column;
  align-items: center;
  width: 17px;
  padding: 7px 0;
  background: #f4f4f4;
`;

const Thumb = styled.div`
  width: 15px;
  height: 15px;
  margin: 37px 0 auto;
  border: 1px solid #979797;
  border-radius: 2px;
  background: linear-gradient(90deg, #f5f5f5 45%, #d2d2d6 55%);
`;

const TerminalTabRow = styled.div`
  display: flex;
  height: 23px;
  padding-left: 3px;
  border-top: 1px solid #000;
  background: #f0f0f0;
`;

const TerminalTab = styled(ChartTab)`
  height: 18px;
  padding: 0 9px;

  ${({ $active }) =>
    $active &&
    css`
      margin-left: 0;
      margin-right: 2px;
    `}
`;

const TerminalNote = styled.p`
  display: flex;
  align-items: center;
  height: 18px;
  margin: 0;
  padding-left: 9px;
  font-family: 'Liberation Sans', Arial, sans-serif;
  font-size: 11px;
`;

const CutTab = styled.span`
  color: #6d6d6d;
`;

const Terminal = () => {
  const [active, setActive] = useState('Trade');

  return (
    <TerminalFrame>
      <SideStrip>
        <CloseButton aria-label="Close terminal"><CloseMark color="#000" /></CloseButton>
        <SideTitle>Terminal</SideTitle>
      </SideStrip>
      <div>
        <TableArea>
          <OrderTable>
            <colgroup>
              {columns.map(({ width }, i) => (
                <col key={i} width={width} />
              ))}
            </colgroup>
            <thead>
              <tr>
                {columns.map(({ name }, i) => (
                  <HeadCell key={i} $left={i === 0}>
                    {name}
                    {i === 0 && (
                      <svg width="22" height="8" aria-hidden="true">
                        <path d="M12 8l4-7" stroke="#888" /><path d="M16 1l4 7h-8" stroke="#ddd" fill="none" />
                      </svg>
                    )}
                  </HeadCell>
                ))}
              </tr>
            </thead>
            <tbody>
              <tr>
                <BalanceCell colSpan={11}>
                  <WithIcon>
                    <BalanceIcon />
                    {'Balance: 1 822.07 USD  Equity: 1 823.48  Margin: 570.92  Free margin: 1 252.56  Margin level: 319.40%'}
                  </WithIcon>
                </BalanceCell>
                <BalanceCell $total>1.41</BalanceCell>
              </tr>
              {orders.map(({ id, type, size, price }) => (
                <OrderRow key={id}>
                  <Cell $left><WithIcon><OrderIcon />{id}</WithIcon></Cell>
                  <Cell>2014.01.28 23:56</Cell>
                  <Cell>{type}</Cell>
                  <Cell>{size}</Cell>
                  <Cell>eurusdm</Cell>
                  <Cell>{price}</Cell>
                  <Cell>0.00000</Cell>
                  <Cell>0.00000</Cell>
                  <Cell>1.35764</Cell>
                  <Cell $open />
                  <Cell />
                  <Cell $open>
                    <DeleteButton aria-label={`Delete ${id}`}><CloseMark /></DeleteButton>
                  </Cell>
                </OrderRow>
              ))}
            </tbody>
          </OrderTable>
          <ScrollBar>
            <svg width="7" height="5"><path d="M0 4.500L3.500.500 7 4.500z" fill="#444" /></svg>
            <Thumb />
            <svg width="7" height="5"><path d="M0 .500h7L3.500 4.500z" fill="#444" /></svg>
          </ScrollBar>
        </TableArea>
        <TerminalTabRow>
          {terminalTabs.map((tab) => (
            <TerminalTab key={tab} $active={tab === active} onClick={() => setActive(tab)}>
              {tab}
            </TerminalTab>
          ))}
          <TerminalNote>
            <CutTab>Jou</CutTab>* Buy Limit = buy at market if touched, Sell Limit = sell at market if touched
          </TerminalNote>
        </TerminalTabRow>
      </div>
    </TerminalFrame>
  );
};

/* ---------- status bar ---------- */

const StatusRow = styled.footer`
  display: flex;
  flex: none;
  align-items: center;
  height: 22px;
  padding-top: 3px;
  border-top: 1px solid #a0a0a0;
  background: #f0f0f0;
`;

const StatusCell = styled.span`
  display: flex;
  flex: none;
  align-items: center;
  width: ${({ $width }) => $width}px;
  height: 16px;
  padding-left: 5px;
  border-left: 1px solid #a0a0a0;
  white-space: nowrap;
`;

const HelpText = styled.span`
  flex: 1;
  padding-left: 2px;
`;

const Traffic = styled.span`
  margin-left: 40px;
`;

const bars = [0, 1, 2, 3, 4, 5, 6, 7];

const StatusBar = () => (
  <StatusRow>
    <HelpText>For Help, press F1</HelpText>
    <StatusCell $width={116}>1</StatusCell>
    <StatusCell $width={102}>2014.01.21 00:00</StatusCell>
    <StatusCell $width={72}>O: 1.05879</StatusCell>
    <StatusCell $width={71}>H: 1.06020</StatusCell>
    <StatusCell $width={67}>L: 1.05624</StatusCell>
    <StatusCell $width={70}>C: 1.05887</StatusCell>
    <StatusCell $width={67}>V: 40947</StatusCell>
    <StatusCell $width={161}>
      <svg width="24" height="12" aria-hidden="true">
        {bars.map((i) => (
          <g key={i}>
            <rect x={i * 3} y="0" width="2" height={9 - i} fill="#5f7f12" />
            <rect x={i * 3} y={10 - i} width="2" height={2 + i} fill="#a82410" />
          </g>
        ))}
      </svg>
      <Traffic>1917/1 kb</Traffic>
    </StatusCell>
  </StatusRow>
);

const Workspace = styled.div`
  display: flex;
  flex-direction: column;
  height: 100vh;
`;

const App = () => (
  <>
    <GlobalStyle />
    <Workspace>
      <TitleBar />
      <MenuBar />
      <Toolbar />
      <Chart />
      <ChartTabs />
      <Terminal />
      <StatusBar />
    </Workspace>
  </>
);

export default App;
